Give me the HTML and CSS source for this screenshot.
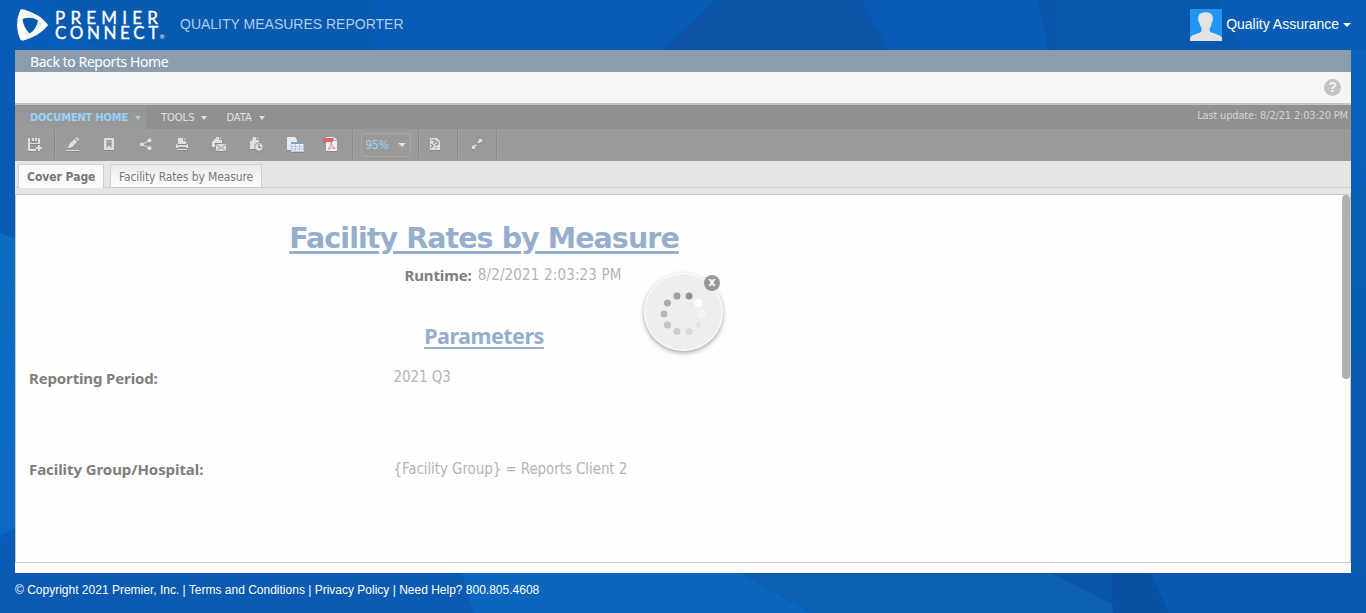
FILE: index.html
```html
<!DOCTYPE html>
<html lang="en">
<head>
<meta charset="utf-8">
<title>Quality Measures Reporter</title>
<link rel="stylesheet" href="styles.css">
</head>
<body>
<svg class="backdrop" viewBox="0 0 1366 613" aria-hidden="true">
  <defs><linearGradient id="edge" x1="0" y1="0" x2="0" y2="1"><stop offset="0" stop-color="#0a60ba"/><stop offset=".6" stop-color="#095ab0"/><stop offset="1" stop-color="#095ab0"/></linearGradient>
  <linearGradient id="leftpane" x1="0" y1="0" x2="0" y2="1"><stop offset="0" stop-color="#0c6cc0"/><stop offset="1" stop-color="#0b69c4"/></linearGradient></defs>
  <rect width="1366" height="613" fill="#085cb5"/>
  <path d="M50 34V0H375V50H120Z" fill="#0957ad" opacity=".6"/>
  <path d="M105 34L125 50H50V40Z" fill="#095fba" opacity=".3"/>
  <path d="M716 0H862L888 50H662Z" fill="#0b54a8"/>
  <path d="M1038 0H1054V50H1048Z" fill="#0a55ab"/>
  <path d="M1054 0H1217L1243 50H1054Z" fill="#0958ad"/>
  <rect x="1351" y="50" width="15" height="563" fill="url(#edge)"/>
  <path d="M0 233L15 238V527L0 537Z" fill="url(#leftpane)"/>
  <path d="M0 573H462L473 613H0Z" fill="#0a5ab1"/>
  <path d="M462 573H740L811 613H473Z" fill="#0b66bd"/>
  <path d="M740 573H1051L1130 613H811Z" fill="#0c5fb2"/>
  <path d="M1051 573H1111L1113 613H1130Z" fill="#0a55ac"/>
  <path d="M1111 573H1151L1169 613H1113Z" fill="#0a50a3"/>
  <path d="M1151 573H1366V613H1169Z" fill="#0959b0"/>
</svg>

<header class="topbar">
  <svg class="shield" width="32" height="34" viewBox="0 0 32 34" aria-hidden="true">
    <path d="M4 2.500Q5 .500 8 1.500Q24 6.500 31 15.500Q32.500 17 31 18.500Q23 28 7.500 32.500Q5 33 4 31Q-2 17 4 2.500Z" fill="#fff"/>
    <path d="M21.500 13L27 15.500L20.500 21Z" fill="#e2e5e8"/><path d="M9 7L16 6.500L20 11Z" fill="#e6e9eb"/><path d="M14 26L9 28.500L9.500 23.500Z" fill="#e3e6e9"/>
    <path d="M6.500 11Q14.500 8 22 12.200Q21 20.500 13.800 25.500Q7.500 20 6.500 11Z" fill="#0858ae"/>
  </svg>
  <div class="wordmark"><span>PREMIER</span><span class="second">CONNECT<small>®</small></span></div>
  <div class="product">QUALITY MEASURES REPORTER</div>
  <div class="user">
    <svg width="32" height="32" viewBox="0 0 32 32" aria-hidden="true"><rect width="32" height="32" fill="#2196f3"/><path d="M0 32V29C1 26 7 25 11 23Q12 21 11.500 19Q9.500 16 9 13Q7.500 12 8.200 10Q7.500 3 15.500 3.200Q23.500 3 22.800 10Q23.500 12 22 13Q21.500 17 19.800 19Q19.300 21 20.300 23C25 25 31 26 32 29V32Z" fill="#e3e3e3"/></svg>
    <span class="username">Quality Assurance</span><i class="caret"></i>
  </div>
</header>

<main class="shell">
  <nav class="back">Back to Reports Home</nav>
  <div class="helpbar"><span class="help">?</span></div>
  <div class="menus">
    <div class="menu active"><span class="menu-home">DOCUMENT HOME</span><i class="caret"></i></div>
    <div class="menu"><span class="menu-tools">TOOLS</span><i class="caret"></i></div>
    <div class="menu data"><span class="menu-data">DATA</span><i class="caret"></i></div>
    <span class="updated">Last update: 8/2/21 2:03:20 PM</span>
  </div>
  <div class="toolbar">
    <div class="group first">
      <svg class="ic" viewBox="0 0 16 16"><path d="M1 2H3V7H11V2H12L13 3V8H3V13H9V15H1Z"/><path d="M5 2H7V5H5ZM8 2H10V5H8Z"/><path d="M11 9H13V11H15V13H13V15H11V13H9V11H11Z"/></svg>
    </div>
    <div class="group tools">
      <svg class="ic pen" viewBox="0 0 16 16"><path d="M1 14H14V15H1ZM3 12.500L4 8.500L9.500 3L12.300 5.800L7 11.300ZM10.300 2.200L11.500 1L14.300 3.800L13 5Z"/></svg>
      <svg class="ic" viewBox="0 0 16 16"><path fill-rule="evenodd" d="M3 2H13V14H3ZM5.500 4V12L8 9.500L10.500 12V4Z"/><path d="M6.500 4H9.500V7H6.500Z" opacity=".35"/></svg>
      <svg class="ic" viewBox="0 0 16 16"><circle cx="4" cy="8.500" r="2.100"/><circle cx="11.500" cy="4.500" r="2.100"/><circle cx="11.500" cy="12.300" r="2.100"/><path d="M4 8.500L11.500 4.500M4 8.500L11.500 12.300" stroke="#dedede"/></svg>
      <svg class="ic" viewBox="0 0 16 16"><path d="M4 2H9V5H12V8H4ZM10 2L12 4H10ZM2 8H3V9H13V8H14V12H12V11H4V12H2ZM3 13H13V14H3Z"/></svg>
      <svg class="ic" viewBox="0 0 16 16"><path d="M5 1H8V4H11V7H4V11H1V5H3V3H5ZM9 1L11 3H9ZM5 8H15V15H5Z"/><path d="M5.500 8.500L10 12.500L14.500 8.500M6 14.500L8.500 12M14 14.500L11.500 12" fill="none" stroke="#8c8c8c"/></svg>
      <svg class="ic" viewBox="0 0 16 16"><path d="M5 1H8V4H11V6L7 8V13H2V5H4V3H5ZM9 1L11 3H9Z"/><circle cx="11" cy="11" r="4.200" stroke="#9a9a9a"/><path d="M11 8V11.500H13.500" fill="none" stroke="#858585" stroke-width="1.200"/></svg>
      <svg class="ic wide" viewBox="0 0 18 16"><path d="M1 1H9L11 4V14H1Z" fill="#e6e8ea"/><path d="M5 6H18V16H5Z" fill="#edf1f7"/><path d="M5 6H18V8H5Z" fill="#849fc9"/><path d="M5 10.500H18M5 13H18M9.300 8V15M13.500 8V15M5.500 8V15.500H17.500V8" stroke="#a9bce0" stroke-width=".8" fill="none"/></svg>
      <svg class="ic pdf" viewBox="0 0 16 16"><path d="M4 1H12L15 4V15H4Z" fill="#eee"/><path d="M1 2H11V6H1Z" fill="#dd6464"/><path d="M6 13.500Q9.500 9 9.200 6.500Q9.500 11 13.500 12.500Q9 10.500 6 13.500" fill="none" stroke="#e88a8a"/><path d="M11.500 1V4.500H15" fill="none" stroke="#aaa"/></svg>
    </div>
    <div class="group zoom"><div class="combo"><span class="pct">95%</span><i class="caret"></i></div></div>
    <div class="group doc"><svg class="ic" viewBox="0 0 16 16"><path d="M3 2H10L13 5V14H3Z"/><path d="M7 8V6H11V8L9 9V10M9 11V12.500M4 8L6 10L4 12M4 4H7L9 5" fill="none" stroke="#858585" stroke-width="1.200"/></svg></div>
    <div class="group full"><svg class="ic" viewBox="0 0 16 16"><path d="M9 3H13V7L11.700 5.700L9.700 7.700L8.300 6.300L10.300 4.300ZM3 9L4.300 10.300L6.300 8.300L7.700 9.700L5.700 11.700L7 13H3Z"/></svg></div>
  </div>
  <div class="tabs"><div class="tab on"><span class="tab-cover">Cover Page</span></div><div class="tab"><span class="tab-rates">Facility Rates by Measure</span></div></div>
  <section class="report">
    <div class="center">
      <h1><span class="title">Facility Rates by Measure</span></h1>
      <div class="runtime"><b class="run-label">Runtime:</b><span class="run-value">8/2/2021 2:03:23 PM</span></div>
      <h2><span class="subtitle">Parameters</span></h2>
    </div>
    <dl class="params">
      <dt>Reporting Period:</dt><dd class="period">2021 Q3</dd>
      <dt class="hospital">Facility Group/Hospital:</dt><dd>{Facility Group} = Reports Client 2</dd>
    </dl>
    <i class="thumb"></i>
  </section>
</main>
<footer class="footer">© Copyright 2021 Premier, Inc. | Terms and Conditions | Privacy Policy | Need Help? 800.805.4608</footer>

<div class="loader">
  <svg width="80" height="80" viewBox="0 0 80 80" aria-hidden="true">
    <g stroke-width=".5"><circle cx="46" cy="24" r="3.500" fill="#929292"/><circle cx="34" cy="24" r="3.500" fill="#9e9e9e"/><circle cx="24.500" cy="31" r="3.500" fill="#aaa"/><circle cx="21" cy="42" r="3.500" fill="#b7b7b7"/><circle cx="24.500" cy="53" r="3.500" fill="#c3c3c3"/><circle cx="34" cy="59.500" r="3.500" fill="#cecece"/><circle cx="46" cy="59.500" r="3.500" fill="#dadada"/><circle cx="55.500" cy="53" r="3.500" fill="#e5e5e5" stroke="#fafafa"/><circle cx="59" cy="42" r="3.500" fill="#f2f2f2" stroke="#fff"/><circle cx="55.500" cy="31" r="4" fill="#fff"/></g>
  </svg>
  <span class="close">x</span>
</div>
</body>
</html>
```

FILE: styles.css
```css
* { box-sizing: border-box; }
body { margin: 0; height: 613px; overflow: hidden; background: #085cb5; font-family: "Liberation Sans", Arial, sans-serif; position: relative; white-space: nowrap; }
.backdrop { position: absolute; left: 0; top: 0; width: 1366px; height: 613px; z-index: -1; }
.caret { display: inline-block; border: 4px solid transparent; border-top-color: currentColor; border-bottom: 0; }

.topbar { height: 50px; padding: 0 15px 0 16px; display: flex; align-items: center; color: #fff; }
.shield { margin-top: -1px; }
.wordmark { width: 116px; margin-left: 7px; font: 17px/15px Lato, sans-serif; -webkit-text-stroke: .35px #fff; display: flex; flex-direction: column; letter-spacing: 5.2px; }
.wordmark .second { letter-spacing: 3.6px; }
.wordmark small { font-size: 6px; line-height: 0; letter-spacing: 0; margin-left: -2px; -webkit-text-stroke: 0; }
.product { margin-left: 9px; margin-top: -3px; font-size: 14px; color: #b1cdeb; }
.user { margin-left: auto; display: flex; align-items: center; font-size: 14px; }
.username { margin: -2px 4px 0 4px; }

.shell { margin: 0 15px; height: 523px; background: #fefefe; font-family: "DejaVu Sans Condensed", "DejaVu Sans", sans-serif; font-stretch: condensed; }
.back { height: 22px; background: #8b9dac; color: #fff; padding-left: 15px; font: 14px/23px "Noto Sans", sans-serif; letter-spacing: -.42px; }
.helpbar { height: 33px; background: #f5f5f5; border-bottom: 2px solid #c4c4c4; display: flex; justify-content: flex-end; padding: 7px 10px 0; }
.help { width: 17px; height: 17px; border-radius: 50%; background: #c4c4c4; color: #f5f5f5; font: bold 14px/17px "Liberation Sans", sans-serif; text-align: center; }
.menus { height: 24px; background: #909090; display: flex; color: #e2e2e2; font-size: 11px; line-height: 25px; }
.menu { display: flex; align-items: center; gap: 7px; padding-left: 15px; }
.menu .caret { border-width: 4px 3.500px 0; margin-top: 1px; }
.menu.active { width: 131px; color: #97d3fa; font-weight: bold; letter-spacing: -.18px; background: linear-gradient(#959595, #9a9a9a); }
.menu.data { padding-left: 19px; }
.updated { margin-left: auto; margin-right: 3px; line-height: 21px; letter-spacing: -.17px; color: #d3d3d3; }
.toolbar { height: 32px; background: #9a9a9a; display: flex; align-items: stretch; }
.group { display: flex; align-items: center; justify-content: center; border-right: 1px solid #888; height: 29px; margin-top: 1px; box-shadow: 1px 0 #a3a3a3; }
.ic { width: 16px; height: 16px; fill: #dedede; margin-top: -1px; filter: drop-shadow(0 1px 0 #888); }
.first { width: 40px; }
.tools { width: 298px; justify-content: flex-start; padding-left: 9px; gap: 20.800px; }
.tools .pen { margin-left: 1px; margin-right: -1px; }
.tools .wide { width: 18px; margin-left: 1px; }
.tools .pdf { margin-left: -3px; }
.zoom { width: 66px; }
.combo { width: 50px; height: 24px; border: 1px solid #a8a8a8; border-radius: 2px; color: #97d3fa; font-size: 12px; letter-spacing: -.3px; display: flex; align-items: center; justify-content: space-between; padding: 0 4px; }
.combo .caret { color: #e2e2e2; }
.doc { width: 39px; padding-right: 6px; }
.full { width: 39px; }

.tabs { height: 33px; background: #e6e6e6; padding: 3px 3px 0; display: flex; gap: 6px; position: relative; }
.tabs::after { content: ""; position: absolute; left: 0; right: 0; top: 26px; height: 1px; background: #ccc; }
.tab { height: 23px; width: 152px; border: 1px solid #d0d0d0; border-bottom: 0; background: linear-gradient(#e9e9e9, #fafafa 70%); color: #777; font-size: 12px; line-height: 24px; letter-spacing: -.12px; padding-left: 8px; position: relative; z-index: 1; }
.tab.on { width: 86px; height: 24px; background: #f9f9f7; font-weight: bold; letter-spacing: -.03px; }
.report { height: 369px; border: 1px solid #c8c8c8; position: relative; }
.center { width: 936px; text-align: center; color: #95aecc; }
h1, h2 { margin: 0; }
h1 { padding-top: 26px; font: bold 28.5px/36px "DejaVu Sans", sans-serif; letter-spacing: -.93px; text-decoration: underline 3px; text-underline-offset: 3px; }
.runtime { padding-left: 58px; margin-top: 7px; height: 22px; font-size: 15px; line-height: 22px; color: #b4b4b4; display: flex; justify-content: center; gap: 6px; }
.run-label { font: bold 15px/22px "Noto Sans", sans-serif; letter-spacing: -.1px; color: #7e7e7e; }
.run-value { letter-spacing: .15px; }
h2 { margin-top: 35px; font: bold 21.5px/30px "Noto Sans", sans-serif; letter-spacing: -.5px; text-decoration: underline 2px; text-underline-offset: 3px; }
.params { margin: 16px 0 0; padding-left: 13px; display: grid; grid-template-columns: 364.500px auto; grid-template-rows: 91px 30px; font-size: 15px; line-height: 22px; letter-spacing: -.09px; color: #b4b4b4; }
.params dt { font: bold 15px/22px "Noto Sans", sans-serif; letter-spacing: -.14px; color: #7e7e7e; }
.params .hospital { letter-spacing: -.07px; }
.params dd { margin: 0; }
.params .period { line-height: 20px; }
.thumb { position: absolute; right: 0; top: 0; width: 8px; height: 184px; border-radius: 4px; background: #b0b0b0; }
.footer { padding: 10px 15px 0; font-size: 12px; line-height: 14px; color: #fff; }

.loader { position: absolute; left: 644px; top: 273px; width: 79px; height: 78px; border-radius: 50%; border: 1px solid #fff; background: #eee; box-shadow: 0 2px 5px rgba(0,0,0,.35); }
.loader svg { position: absolute; left: -2px; top: -2px; }
.close { position: absolute; right: 2px; top: 1px; width: 16px; height: 16px; border-radius: 50%; background: #999; color: #fff; font: bold 12px/14px "Noto Sans", sans-serif; text-align: center; }
```
